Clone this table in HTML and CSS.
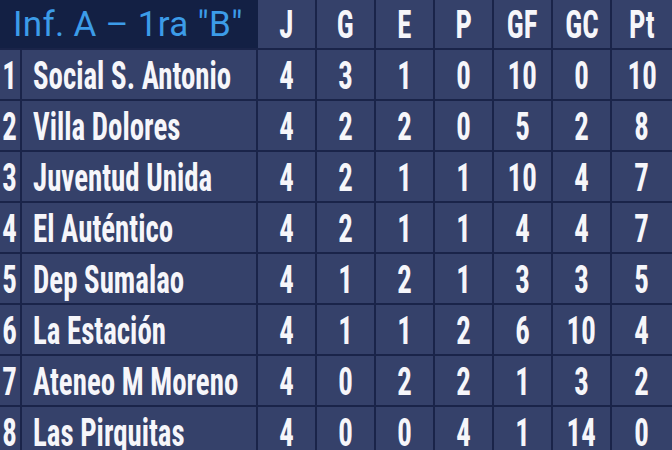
FILE: index.html
```html
<!DOCTYPE html>
<html lang="es">
<head>
<meta charset="utf-8">
<title>Inf. A – 1ra "B"</title>
<link rel="stylesheet" href="styles.css">
</head>
<body>
<div class="table">
  <div class="title">Inf. A – 1ra "B"</div>
  <div class="cell"><span>J</span></div><div class="cell"><span>G</span></div><div class="cell"><span>E</span></div><div class="cell"><span>P</span></div><div class="cell"><span>GF</span></div><div class="cell"><span>GC</span></div><div class="cell"><span>Pt</span></div>

  <div class="cell"><span>1</span></div><div class="cell name"><span>Social S. Antonio</span></div><div class="cell"><span>4</span></div><div class="cell"><span>3</span></div><div class="cell"><span>1</span></div><div class="cell"><span>0</span></div><div class="cell"><span>10</span></div><div class="cell"><span>0</span></div><div class="cell"><span>10</span></div>
  <div class="cell"><span>2</span></div><div class="cell name"><span>Villa Dolores</span></div><div class="cell"><span>4</span></div><div class="cell"><span>2</span></div><div class="cell"><span>2</span></div><div class="cell"><span>0</span></div><div class="cell"><span>5</span></div><div class="cell"><span>2</span></div><div class="cell"><span>8</span></div>
  <div class="cell"><span>3</span></div><div class="cell name"><span>Juventud Unida</span></div><div class="cell"><span>4</span></div><div class="cell"><span>2</span></div><div class="cell"><span>1</span></div><div class="cell"><span>1</span></div><div class="cell"><span>10</span></div><div class="cell"><span>4</span></div><div class="cell"><span>7</span></div>
  <div class="cell"><span>4</span></div><div class="cell name"><span>El Auténtico</span></div><div class="cell"><span>4</span></div><div class="cell"><span>2</span></div><div class="cell"><span>1</span></div><div class="cell"><span>1</span></div><div class="cell"><span>4</span></div><div class="cell"><span>4</span></div><div class="cell"><span>7</span></div>
  <div class="cell"><span>5</span></div><div class="cell name"><span>Dep Sumalao</span></div><div class="cell"><span>4</span></div><div class="cell"><span>1</span></div><div class="cell"><span>2</span></div><div class="cell"><span>1</span></div><div class="cell"><span>3</span></div><div class="cell"><span>3</span></div><div class="cell"><span>5</span></div>
  <div class="cell"><span>6</span></div><div class="cell name"><span>La Estación</span></div><div class="cell"><span>4</span></div><div class="cell"><span>1</span></div><div class="cell"><span>1</span></div><div class="cell"><span>2</span></div><div class="cell"><span>6</span></div><div class="cell"><span>10</span></div><div class="cell"><span>4</span></div>
  <div class="cell"><span>7</span></div><div class="cell name"><span>Ateneo M Moreno</span></div><div class="cell"><span>4</span></div><div class="cell"><span>0</span></div><div class="cell"><span>2</span></div><div class="cell"><span>2</span></div><div class="cell"><span>1</span></div><div class="cell"><span>3</span></div><div class="cell"><span>2</span></div>
  <div class="cell"><span>8</span></div><div class="cell name"><span>Las Pirquitas</span></div><div class="cell"><span>4</span></div><div class="cell"><span>0</span></div><div class="cell"><span>0</span></div><div class="cell"><span>4</span></div><div class="cell"><span>1</span></div><div class="cell"><span>14</span></div><div class="cell"><span>0</span></div>
</div>
</body>
</html>
```
FILE: styles.css
```css
html, body {
  margin: 0;
  padding: 0;
  background: #1a2449;
  overflow: hidden;
}
.table {
  display: grid;
  grid-template-columns: 20px 234px repeat(6, 57px) 60px;
  grid-template-rows: 48px repeat(8, 49px);
  gap: 2px;
  background: #1a2449;
  width: 672px;
}
.title {
  grid-column: 1 / 3;
  background: #132044;
  color: #3c9ce8;
  font-family: Roboto, "Liberation Sans", sans-serif;
  font-size: 35px;
  letter-spacing: 0.3px;
  line-height: 50px;
  padding-left: 13px;
  margin-right: -2px;
  white-space: nowrap;
}
.cell {
  background: #35416a;
  color: #f6f6fa;
  font-family: "Roboto Condensed", "Liberation Sans Narrow", "DejaVu Sans Condensed", sans-serif;
  font-weight: 700;
  font-size: 38px;
  display: flex;
  align-items: center;
  justify-content: center;
  white-space: nowrap;
  overflow: hidden;
}
.cell span {
  display: inline-block;
  transform: scaleX(0.76);
  transform-origin: center;
  line-height: 1;
  padding-top: 2px;
}
.name {
  justify-content: flex-start;
  padding-left: 11px;
}
.name span {
  transform-origin: left center;
}
```
